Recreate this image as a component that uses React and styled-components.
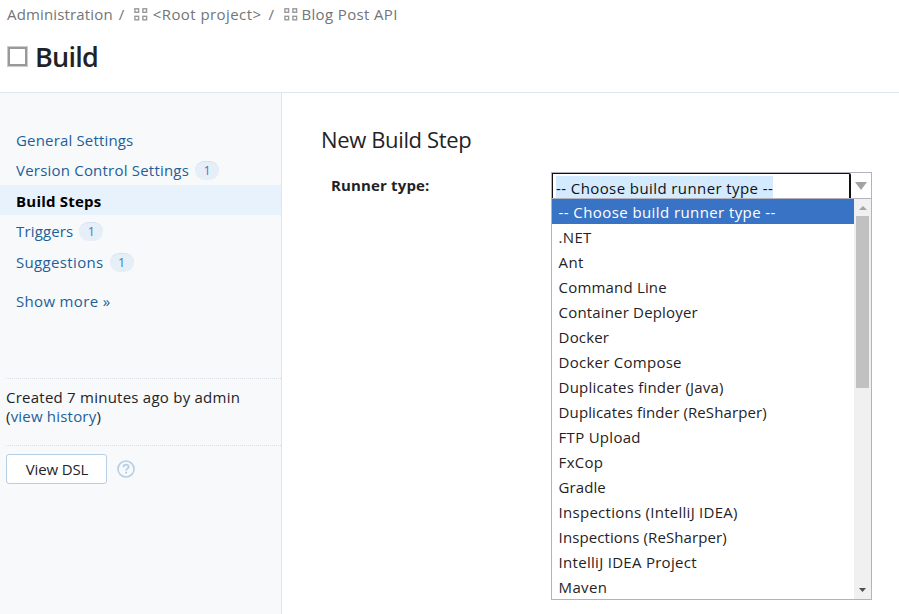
import React from 'react';
import styled, { createGlobalStyle } from 'styled-components';

const GlobalStyle = createGlobalStyle`
  *, *::before, *::after { box-sizing: border-box; }
  body {
    margin: 0;
    overflow: hidden;
    background: #fff;
    color: #1f2326;
    font: 15px/19px "Open Sans", "Noto Sans", sans-serif;
  }
`;

const Page = styled.div`
  display: flex;
  flex-direction: column;
  height: 614px;
`;

const Header = styled.header`
  height: 93px;
  flex: none;
  padding: 4px 0 0 7px;
  border-bottom: 1px solid #dfe5eb;
`;

const Text = styled.span`
  letter-spacing: ${(p) => p.$ls ?? 0}px;
  white-space: pre;
`;

const Breadcrumbs = styled.nav`
  display: flex;
  align-items: center;
  height: 20px;
  color: #737577;
`;

const Separator = styled.span`
  width: 8px;
  margin: 0 ${(p) => p.$after ?? 8}px 0 ${(p) => p.$before ?? 6}px;
`;

const Crumb = styled.span`
  display: flex;
  align-items: center;
  gap: ${(p) => p.$gap || 0}px;
`;

const TitleRow = styled.div`
  display: flex;
  align-items: center;
  gap: 7px;
  height: 40px;
  margin-top: 13px;
`;

const BuildIcon = styled.span`
  width: 21px;
  height: 21px;
  margin-top: -2px;
  border: 3px solid #999;
  outline: 1px solid #ccc;
  outline-offset: -1px;
`;

const Title = styled.h1`
  margin: 0;
  font-size: 27px;
  line-height: 36px;
  font-weight: 600;
  letter-spacing: -0.75px;
`;

const Body = styled.div`
  display: flex;
  flex: 1;
  min-height: 0;
`;

const Sidebar = styled.aside`
  width: 282px;
  flex: none;
  padding-top: 31px;
  background: #f7f9fb;
  border-right: 1px solid #dfe5eb;
`;

const NavItem = styled.a`
  display: flex;
  align-items: center;
  gap: 6px;
  height: ${(p) => (p.$active ? 30 : 30.5)}px;
  margin-bottom: ${(p) => (p.$active ? 0.5 : 0)}px;
  padding: 2px 0 0 16px;
  color: ${(p) => (p.$active ? '#000' : '#1e5f99')};
  font-weight: ${(p) => (p.$active ? 700 : 400)};
  background: ${(p) => (p.$active ? '#e7f2fd' : 'transparent')};
`;

const Badge = styled.span`
  width: 24px;
  height: 19px;
  margin-top: -0.5px;
  border-radius: 10px;
  border-top: 1px solid #d3e1f1;
  background: #e6eff8;
  color: #3f78c8;
  font-size: 12.5px;
  line-height: 18px;
  text-align: center;
`;

const ShowMore = styled.a`
  display: block;
  margin: 15px 0 67px 16px;
  color: #1e5f99;
`;

const Created = styled.div`
  height: 67px;
  margin-left: 6px;
  padding-top: 9px;
  border-top: 1px dotted #d8dfe7;
`;

const Link = styled.a`
  color: #1e5f99;
`;

const Actions = styled.div`
  display: flex;
  gap: 10px;
  align-items: center;
  margin-left: 6px;
  padding-top: 8px;
  border-top: 1px dotted #d8dfe7;
`;

const Button = styled.button`
  width: 101px;
  height: 30px;
  padding: 2px 0 0 1px;
  border: 1px solid #b4cfe6;
  border-radius: 3px;
  background: #fff;
  color: #1f2326;
  font: inherit;
`;

const Main = styled.main`
  flex: 1;
  padding: 31px 0 0 39px;
`;

const Heading = styled.h2`
  margin: 0;
  height: 48px;
  font-size: 22px;
  line-height: 30px;
  font-weight: 400;
  letter-spacing: -0.36px;
`;

const Field = styled.div`
  display: flex;
  padding-left: 10px;
`;

const Label = styled.label`
  width: 220px;
  padding-top: 4px;
  font-weight: 700;
`;

const Select = styled.div`
  width: 321px;
  border: 1px solid #b3b3bf;
`;

const Control = styled.div`
  display: flex;
  height: 25px;
`;

const Input = styled.div`
  width: 299px;
  padding: 2px 0 0 3px;
  border: solid #111;
  border-width: 1px 2px 0 1px;
  border-top-right-radius: 2px;
  color: #111;
`;

const Selection = styled.div`
  width: 217px;
  height: 22px;
  line-height: 24px;
  background: #d4ebff;
`;

const Toggle = styled.div`
  flex: 1;
  display: flex;
  justify-content: center;
  padding-top: 9px;
`;

const Dropdown = styled.div`
  display: flex;
  height: 401px;
  border-top: 1px solid #b3b3bf;
`;

const Options = styled.div`
  flex: 1;
`;

const Option = styled.div`
  height: 25px;
  padding-left: 6.6px;
  line-height: 27px;
  color: ${(p) => (p.$selected ? '#fff' : '#1f2326')};
  background: ${(p) => (p.$selected ? '#3973c6' : '#fff')};
`;

const Scrollbar = styled.div`
  display: flex;
  flex-direction: column;
  align-items: center;
  justify-content: space-between;
  width: 17px;
  padding: 7px 0;
  background: #f0f0f0;
`;

const Thumb = styled.div`
  width: 13px;
  height: 172px;
  margin: 6px 0 auto;
  background: #c1c1c1;
`;

const Icon = styled.svg`
  display: block;
  flex: none;
`;

const ProjectIcon = () => (
  <Icon width="14" height="13" viewBox="0 0 14 13" fill="none" stroke="#999" strokeWidth="1.4">
    <rect x=".9" y=".8" width="3.7" height="3.5" />
    <rect x="8.9" y=".8" width="3.7" height="3.5" />
    <rect x=".9" y="8.3" width="3.7" height="3.5" />
    <rect x="8.9" y="8.3" width="3.7" height="3.5" />
  </Icon>
);

const HelpIcon = () => (
  <Icon width="18" height="18" viewBox="0 0 18 18" fill="none" stroke="#b4cfe6" strokeWidth="1.6">
    <circle cx="9" cy="9" r="8" />
    <path d="M6.4 7.2C6.4 5.5 7.5 4.6 9 4.6s2.6.9 2.6 2.3c0 1.8-2.5 1.9-2.5 3.7" strokeWidth="1.8" />
    <path d="M9.1 11.7v1.8" strokeWidth="2" />
  </Icon>
);

const Arrow = ({ width, height, color, up }) => (
  <Icon width={width} height={height} viewBox="0 0 10 10" preserveAspectRatio="none" fill={color}>
    <path d={up ? 'M0 10L5 0l5 10z' : 'M0 0h10L5 10z'} />
  </Icon>
);

const navItems = [
  { text: 'General Settings', ls: 0.17 },
  { text: 'Version Control Settings', ls: 0.21, count: 1 },
  { text: 'Build Steps', ls: 0.22, active: true },
  { text: 'Triggers', ls: 0.15, count: 1 },
  { text: 'Suggestions', ls: 0.34, count: 1 },
];

const options = [
  ['-- Choose build runner type --', 0.41],
  ['.NET', 0.3],
  ['Ant', 0.3],
  ['Command Line', 0.18],
  ['Container Deployer', 0.17],
  ['Docker', 0.15],
  ['Docker Compose', 0.26],
  ['Duplicates finder (Java)', 0.22],
  ['Duplicates finder (ReSharper)', 0.11],
  ['FTP Upload', 0.28],
  ['FxCop', 0.3],
  ['Gradle', 0.08],
  ['Inspections (IntelliJ IDEA)', 0.27],
  ['Inspections (ReSharper)', 0.1],
  ['IntelliJ IDEA Project', 0.29],
  ['Maven', 0.33],
];

export default function App() {
  return (
    <Page>
      <GlobalStyle />
      <Header>
        <Breadcrumbs>
          <Text $ls={0.15}>Administration</Text>
          <Separator $after={7}>/</Separator>
          <Crumb $gap={5}>
            <ProjectIcon />
            <Text $ls={0.42}>&lt;Root project&gt;</Text>
          </Crumb>
          <Separator $before={7}>/</Separator>
          <Crumb $gap={3}>
            <ProjectIcon />
            <Text $ls={0.36}>Blog Post API</Text>
          </Crumb>
        </Breadcrumbs>
        <TitleRow>
          <BuildIcon />
          <Title>Build</Title>
        </TitleRow>
      </Header>
      <Body>
        <Sidebar>
          {navItems.map((item) => (
            <NavItem key={item.text} $active={item.active}>
              <Text $ls={item.ls}>{item.text}</Text>
              {item.count && <Badge>{item.count}</Badge>}
            </NavItem>
          ))}
          <ShowMore>
            <Text $ls={0.33}>Show more »</Text>
          </ShowMore>
          <Created>
            <Text $ls={0.24}>Created 7 minutes ago by admin</Text>
            <br />
            <Text $ls={0.2}>
              (<Link>view history</Link>)
            </Text>
          </Created>
          <Actions>
            <Button>
              <Text $ls={-0.15}>View DSL</Text>
            </Button>
            <HelpIcon />
          </Actions>
        </Sidebar>
        <Main>
          <Heading>New Build Step</Heading>
          <Field>
            <Label>
              <Text $ls={0.15}>Runner type:</Text>
            </Label>
            <Select>
              <Control>
                <Input>
                  <Selection>
                    <Text $ls={0.41}>-- Choose build runner type --</Text>
                  </Selection>
                </Input>
                <Toggle>
                  <Arrow width={12} height={8} color="#a3a3a3" />
                </Toggle>
              </Control>
              <Dropdown>
                <Options>
                  {options.map(([text, ls], index) => (
                    <Option key={text} $selected={index === 0}>
                      <Text $ls={ls}>{text}</Text>
                    </Option>
                  ))}
                </Options>
                <Scrollbar>
                  <Arrow width={8} height={4} color="#a3a3a3" up />
                  <Thumb />
                  <Arrow width={7} height={4} color="#505050" />
                </Scrollbar>
              </Dropdown>
            </Select>
          </Field>
        </Main>
      </Body>
    </Page>
  );
}
